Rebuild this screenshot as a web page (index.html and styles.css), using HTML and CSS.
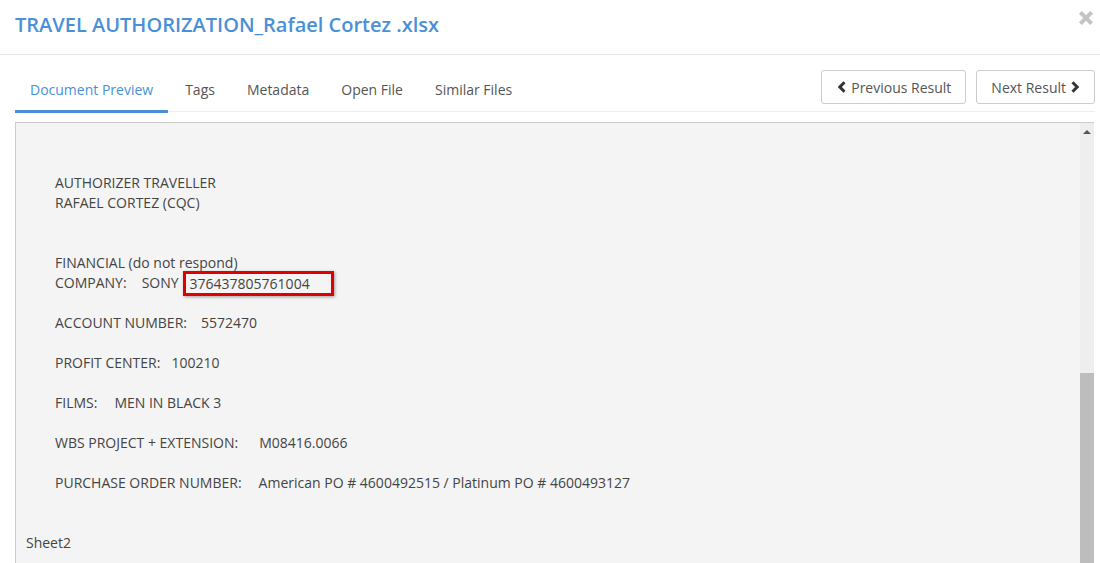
FILE: index.html
```html
<!DOCTYPE html>
<html>
<head>
<meta charset="utf-8">
<link rel="stylesheet" href="styles.css">
</head>
<body>
<div class="modal">
  <header class="head">
    <h1 class="title">TRAVEL AUTHORIZATION_Rafael Cortez .xlsx</h1>
    <svg class="close" viewBox="0 0 16 16"><path d="M3 3 L13 13 M13 3 L3 13" /></svg>
  </header>
  <div class="tabbar">
    <nav class="tabs">
      <a class="tab active">Document Preview</a>
      <a class="tab">Tags</a>
      <a class="tab">Metadata</a>
      <a class="tab">Open File</a>
      <a class="tab">Similar Files</a>
    </nav>
    <div class="navbtns">
      <button class="btn"><svg class="chev" viewBox="0 0 10 12"><path d="M7.5 1.2 L2.8 6 L7.5 10.8" /></svg>Previous Result</button>
      <button class="btn">Next Result<svg class="chev" viewBox="0 0 10 12"><path d="M2.5 1.2 L7.2 6 L2.5 10.8" /></svg></button>
    </div>
  </div>
  <div class="preview">
    <div class="doc">
      <div class="block first">
        <div class="line">AUTHORIZER TRAVELLER</div>
        <div class="line">RAFAEL CORTEZ (CQC)</div>
      </div>
      <div class="block gap2">
        <div class="line">FINANCIAL (do not respond)</div>
        <div class="line">COMPANY:<span class="sp15">SONY</span><span class="hl">376437805761004</span></div>
      </div>
      <div class="line row">ACCOUNT NUMBER:<span class="sp14">5572470</span></div>
      <div class="line row">PROFIT CENTER:<span class="sp11">100210</span></div>
      <div class="line row">FILMS:<span class="sp17">MEN IN BLACK 3</span></div>
      <div class="line row">WBS PROJECT + EXTENSION:<span class="sp21">M08416.0066</span></div>
      <div class="line row">PURCHASE ORDER NUMBER:<span class="sp17">American PO # 4600492515 / Platinum PO # 4600493127</span></div>
      <div class="line sheet">Sheet2</div>
    </div>
    <div class="scrollbar">
      <span class="arrow"></span>
      <span class="thumb"></span>
    </div>
  </div>
</div>
</body>
</html>
```

FILE: styles.css
```css
* { box-sizing: border-box; }
html, body { margin: 0; padding: 0; background: #fff; overflow: hidden; }
body { font-family: "Open Sans", "Liberation Sans", sans-serif; color: #555; width: 1100px; height: 563px; }

.modal { display: flex; flex-direction: column; height: 563px; }

.head {
  height: 55px;
  border-bottom: 1px solid #e5e5e5;
  padding: 0 15px;
  display: flex;
  align-items: center;
  justify-content: space-between;
  position: relative;
}
.title {
  margin: 0;
  font-size: 20px;
  font-weight: 600;
  color: #4a90d9;
  margin-top: -6px;
}
.close {
  position: absolute;
  right: 5px;
  top: 9px;
  width: 18px;
  height: 18px;
}
.close path { stroke: #c4c4c4; stroke-width: 3.6; fill: none; }

.tabbar {
  display: flex;
  justify-content: space-between;
  align-items: flex-end;
  margin: 0 5px 0 15px;
  border-bottom: 1px solid #eee;
  padding-top: 15px;
}
.tabs { display: flex; }
.tab {
  font-size: 14px;
  color: #555;
  padding: 10px 17px 10px 15px;
  line-height: 20px;
  border-bottom: 3px solid transparent;
  margin-bottom: -2px;
}
.tab.active { color: #4a90d9; border-bottom-color: #4a90d9; padding-right: 15px; margin-right: 2px; }

.navbtns { display: flex; gap: 10px; align-self: flex-start; }
.btn {
  font-family: inherit;
  font-size: 14px;
  color: #555;
  background: #fff;
  border: 1px solid #ccc;
  border-radius: 3px;
  height: 34px;
  padding: 0 14px 0 14px;
  display: flex;
  align-items: center;
  gap: 4px;
}
.btn:first-child { padding-left: 15px; padding-right: 14px; }
.chev { width: 10px; height: 12px; }
.chev path { fill: none; stroke: #333; stroke-width: 3; }

.preview {
  flex: 1;
  margin: 10px 6px 0 15px;
  border-top: 1px solid #ccc;
  border-left: 1px solid #ccc;
  background: #f4f4f4;
  display: flex;
  overflow: hidden;
}
.doc { flex: 1; padding-left: 39px; font-size: 14px; color: #444; }
.line { line-height: 20px; height: 20px; white-space: nowrap; }
.block.first { margin-top: 50px; }
.block.gap2 { margin-top: 40px; }
.row { margin-top: 20px; }
.sp11 { margin-left: 11px; }
.sp14 { margin-left: 14px; }
.sp15 { margin-left: 15px; }
.sp17 { margin-left: 17px; }
.sp21 { margin-left: 21px; }
.hl {
  display: inline-block;
  vertical-align: top;
  margin-top: -2px;
  margin-left: 4px;
  height: 25px;
  border: 3px solid #e00000;
  padding: 0 21px 0 4px;
  line-height: 19px;
  box-shadow: 1px 1px 3px rgba(0,0,0,0.35);
}
.sheet { margin-left: -29px; margin-top: 40px; }

.scrollbar {
  width: 14px;
  background: #eee;
  position: relative;
  display: flex;
  flex-direction: column;
  align-items: center;
}
.arrow {
  margin-top: 7px;
  width: 0; height: 0;
  border-left: 4px solid transparent;
  border-right: 4px solid transparent;
  border-bottom: 4px solid #555;
}
.thumb {
  position: absolute;
  left: 0; right: 0;
  top: 250px;
  bottom: 0;
  background: #bdbdbd;
}
```
